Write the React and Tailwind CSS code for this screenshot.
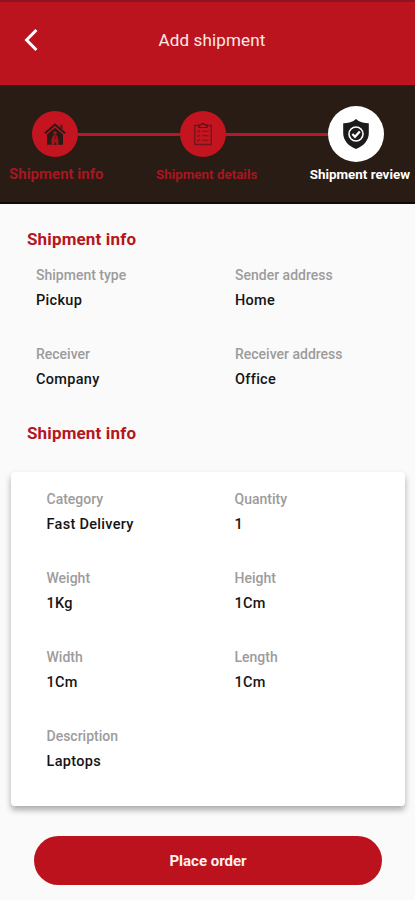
// App.jsx
const shipmentFields = [
  { label: 'Shipment type', value: 'Pickup' },
  { label: 'Sender address', value: 'Home' },
  { label: 'Receiver', value: 'Company' },
  { label: 'Receiver address', value: 'Office' },
];

const packageFields = [
  { label: 'Category', value: 'Fast Delivery' },
  { label: 'Quantity', value: '1' },
  { label: 'Weight', value: '1Kg' },
  { label: 'Height', value: '1Cm' },
  { label: 'Width', value: '1Cm' },
  { label: 'Length', value: '1Cm' },
  { label: 'Description', value: 'Laptops' },
];

function HouseIcon() {
  return (
    <svg className="w-[22px] h-[22px]" viewBox="0 0 22 22" fill="none">
      <path d="M1 10.2 L11 1.6 L21 10.2" stroke="#2a1a14" strokeWidth="2" />
      <path d="M16.4 1.8 H18.6 V6.6 L16.4 4.8 Z" fill="#5e171a" />
      <path d="M3 11.6 L11 4.8 L19 11.6 V21.8 H3 Z" fill="#2a1a14" />
      {/* person in the doorway */}
      <circle cx="11" cy="10" r="1.7" fill="#a3151d" />
      <path d="M9 12.2 H12.8 L14.4 16.5 V21.8 H12.2 L11.2 18.4 L9.8 21.8 H7.4 V17 Z" fill="#a3151d" />
      <path d="M10.6 12.8 L12 14.6 L10.6 16.6" stroke="#2a1a14" strokeWidth="0.8" />
    </svg>
  );
}

function ClipboardIcon() {
  return (
    <svg className="w-[20px] h-[24px]" viewBox="0 0 20 24" fill="none" stroke="#74141b" strokeWidth="1.1">
      <path d="M6 3.5 H1.8 V22.5 H18.2 V3.5 H14" strokeWidth="1.4" />
      <path d="M6 5.5 V3 H8 C8.2 1.2 11.8 1.2 12 3 H14 V5.5 Z" stroke="#4a1217" />
      <path d="M4.4 9 L5.3 10 L7 8 M4.4 13.5 L5.3 14.5 L7 12.5 M4.4 18 L5.3 19 L7 17" />
      <path d="M9 9.3 H15.5 M9 13.8 H15.5 M9 18.3 H15.5" />
    </svg>
  );
}

function ShieldIcon() {
  return (
    <svg className="w-[28px] h-[32px]" viewBox="0 0 28 32" fill="none">
      <path
        d="M14 1 C11 4 6 5.2 1.2 5.2 V15 C1.2 22.5 6.5 28.2 14 31 C21.5 28.2 26.8 22.5 26.8 15 V5.2 C22 5.2 17 4 14 1 Z"
        fill="#1c1a1b"
      />
      <circle cx="14" cy="16" r="7" stroke="#fff" strokeWidth="1.6" />
      <path d="M10.4 16 L13 18.7 L17.8 13.5" stroke="#fff" strokeWidth="2.3" />
    </svg>
  );
}

function Field({ label, value }) {
  return (
    <div className="leading-[25px] font-medium whitespace-nowrap">
      <dt className="text-[14px] text-[#9c9c9c]">{label}</dt>
      <dd className="text-[14.5px] tracking-[0.3px] text-[#151515]">{value}</dd>
    </div>
  );
}

export default function App() {
  return (
    <div className="h-[900px] w-[415px] overflow-hidden bg-[#fafafa] font-['Roboto',sans-serif]">
      {/* Title bar */}
      <header className="flex h-[85px] items-start border-t-2 border-[#8a1422] bg-[#bc141f] pt-[22px]">
        <button type="button" aria-label="Back" className="ml-6 flex h-8 w-4 items-center">
          <svg className="h-[22px] w-[14px]" viewBox="0 0 14 22" fill="none" stroke="#fff" strokeWidth="3">
            <path d="M12.4 1 L2.6 11 L12.4 21" />
          </svg>
        </button>
        <h1 className="ml-[48px] w-[248px] text-center text-[17px] leading-8 tracking-[0.15px] text-[#fde8e6]">Add shipment</h1>
      </header>

      {/* Progress */}
      <nav className="h-[119px] border-b-2 border-[#120a08] bg-[#291c15] pt-[21px]">
        <div className="flex items-center pl-8">
          <div className="flex size-[46px] items-center justify-center rounded-full bg-[#c41420]">
            <HouseIcon />
          </div>
          <div className="h-[3px] w-[102px] bg-[#b9182a]" />
          <div className="flex size-[46px] items-center justify-center rounded-full bg-[#c41420]">
            <ClipboardIcon />
          </div>
          <div className="h-[3px] w-[102px] bg-[#b9182a]" />
          <div className="flex size-14 items-center justify-center rounded-full bg-white">
            <ShieldIcon />
          </div>
        </div>
        <div className="flex items-center justify-between pl-[9px] pr-[5px] leading-[25px] font-bold text-[#a8161f] whitespace-nowrap">
          <span className="text-[15px]">Shipment info</span>
          <span className="text-[13.4px]">Shipment details</span>
          <span className="text-[13.4px] text-white">Shipment review</span>
        </div>
      </nav>

      <main>
        <h2 className="mt-[23px] ml-[27px] text-[17px] leading-6 font-bold tracking-[0.15px] text-[#b5161d]">Shipment info</h2>
        <dl className="mt-3 ml-9 grid grid-cols-[199px_1fr] gap-y-[29px]">
          {shipmentFields.map((field) => (
            <Field key={field.label} {...field} />
          ))}
        </dl>

        <h2 className="mt-[29px] ml-[27px] text-[17px] leading-6 font-bold tracking-[0.15px] text-[#b5161d]">Shipment info</h2>
        <dl className="mx-auto mt-[27px] grid h-[334px] w-[394px] grid-cols-[188px_1fr] content-start gap-y-[29px] rounded bg-white pt-[15px] pl-9 shadow-[0_4px_6px_rgba(0,0,0,0.32)]">
          {packageFields.map((field) => (
            <Field key={field.label} {...field} />
          ))}
        </dl>

        <button
          type="button"
          className="mt-[30px] ml-[34px] block h-[49px] w-[348px] rounded-full bg-[#bc121e] pt-px text-[15px] font-bold text-[#fff0ee]"
        >
          Place order
        </button>
      </main>
    </div>
  );
}
